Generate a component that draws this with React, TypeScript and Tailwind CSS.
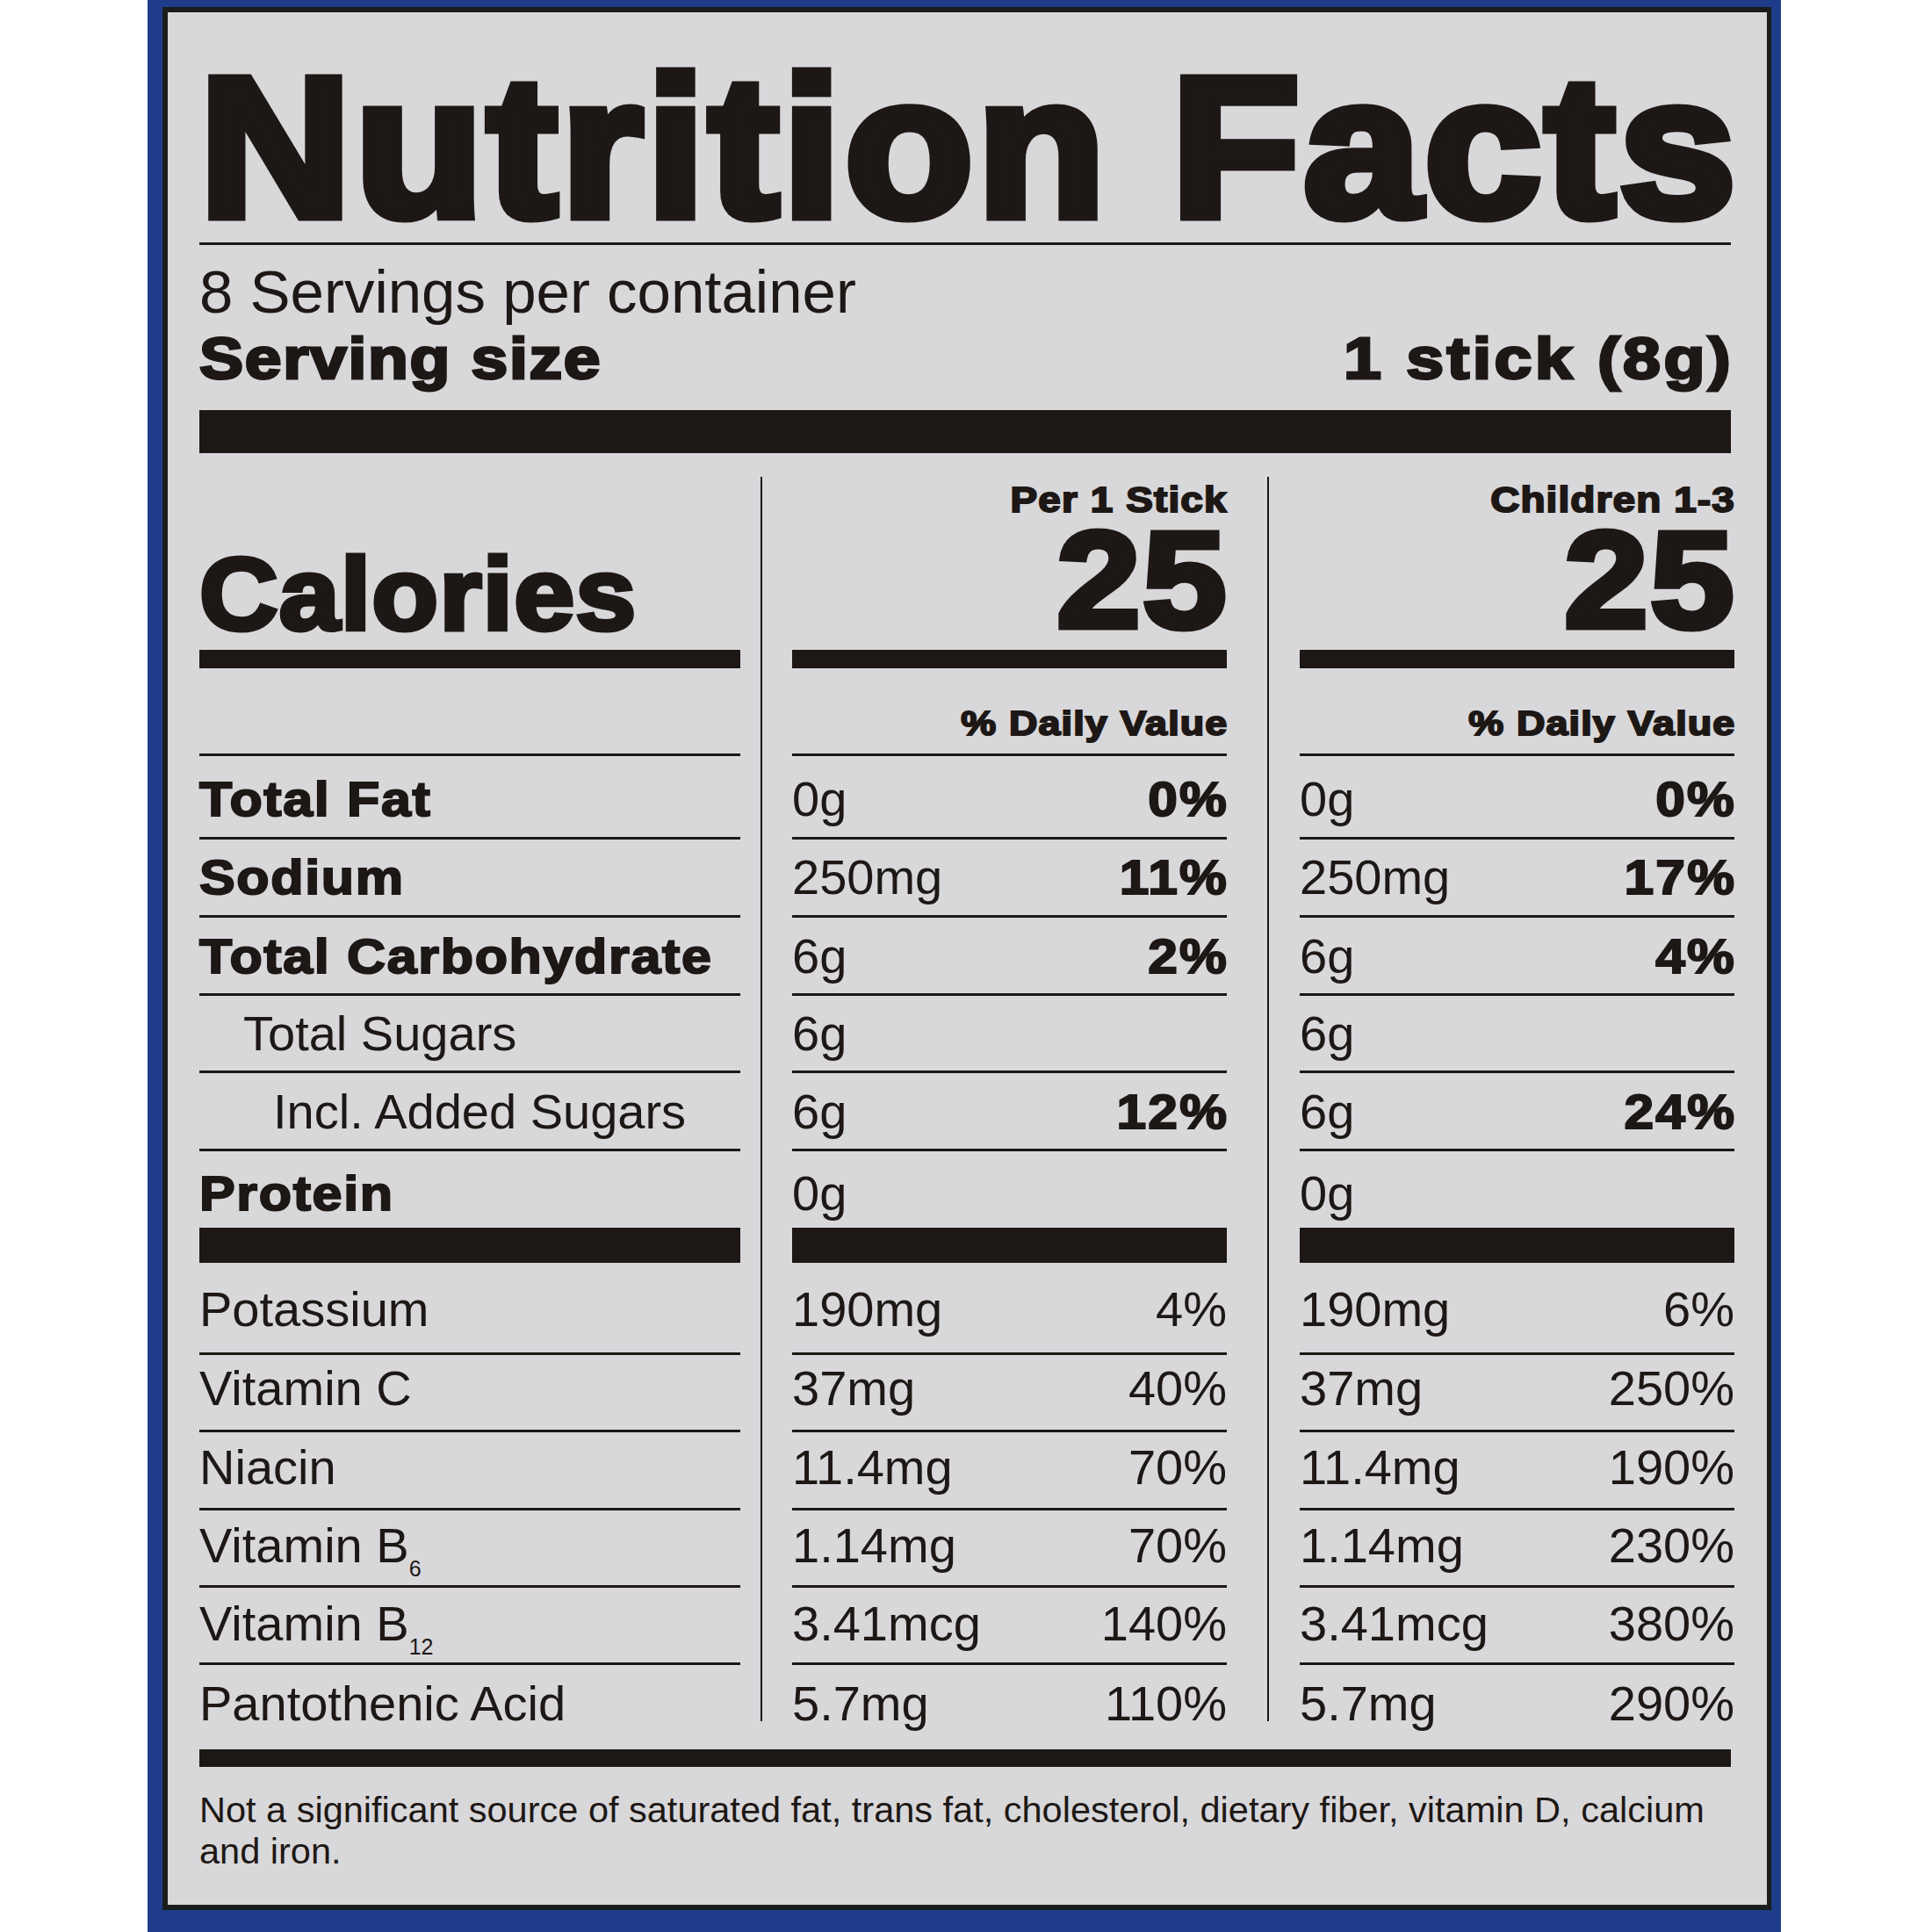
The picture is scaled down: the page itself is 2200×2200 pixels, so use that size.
const mid = [
  { amt: "0g", pct: "0%" },
  { amt: "250mg", pct: "11%" },
  { amt: "6g", pct: "2%" },
  { amt: "6g", pct: "" },
  { amt: "6g", pct: "12%" },
  { amt: "0g", pct: "" },
  { amt: "190mg", pct: "4%" },
  { amt: "37mg", pct: "40%" },
  { amt: "11.4mg", pct: "70%" },
  { amt: "1.14mg", pct: "70%" },
  { amt: "3.41mcg", pct: "140%" },
  { amt: "5.7mg", pct: "110%" },
];

const kids = [
  { amt: "0g", pct: "0%" },
  { amt: "250mg", pct: "17%" },
  { amt: "6g", pct: "4%" },
  { amt: "6g", pct: "" },
  { amt: "6g", pct: "24%" },
  { amt: "0g", pct: "" },
  { amt: "190mg", pct: "6%" },
  { amt: "37mg", pct: "250%" },
  { amt: "11.4mg", pct: "190%" },
  { amt: "1.14mg", pct: "230%" },
  { amt: "3.41mcg", pct: "380%" },
  { amt: "5.7mg", pct: "290%" },
];

// row boxes: height and line-height tuned so baselines land where the label prints them
const rows = [
  { label: "Total Fat", bold: true, indent: "", h: "h-[92px]", lead: "leading-[97px]", after: "line" },
  { label: "Sodium", bold: true, indent: "", h: "h-[86px]", lead: "leading-[85px]", after: "line" },
  { label: "Total Carbohydrate", bold: true, indent: "", h: "h-[86px]", lead: "leading-[87px]", after: "line" },
  { label: "Total Sugars", bold: false, indent: "pl-[50px]", h: "h-[85px]", lead: "leading-[85px]", after: "line" },
  { label: "Incl. Added Sugars", bold: false, indent: "pl-[84px]", h: "h-[86px]", lead: "leading-[87px]", after: "line" },
  { label: "Protein", bold: true, indent: "", h: "h-[87px]", lead: "leading-[95px]", after: "bar" },
  { label: "Potassium", bold: false, indent: "", h: "h-[102px]", lead: "leading-[105px]", after: "line" },
  { label: "Vitamin C", bold: false, indent: "", h: "h-[85px]", lead: "leading-[75px]", after: "line" },
  { label: "Niacin", bold: false, indent: "", h: "h-[86px]", lead: "leading-[79px]", after: "line" },
  { label: "Vitamin B", sub: "6", bold: false, indent: "", h: "h-[85px]", lead: "leading-[79px]", after: "line" },
  { label: "Vitamin B", sub: "12", bold: false, indent: "", h: "h-[85px]", lead: "leading-[81px]", after: "line" },
  { label: "Pantothenic Acid", bold: false, indent: "", h: "h-[96px]", lead: "leading-[87px]", after: "" },
];

// Helvetica Black stand-in: Liberation Sans Bold, widened and thickened
const heavyL = "inline-block origin-left scale-x-[1.09] font-bold tracking-[1.5px] [-webkit-text-stroke:2px_#1d1815]";
const heavyR = "inline-block origin-right scale-x-[1.08] font-bold tracking-[2px] -mr-[2px] [-webkit-text-stroke:2px_#1d1815]";

function Sep({ kind }: { kind: string }) {
  if (kind === "line") return <div className="h-[3px] bg-[#1d1815]" />;
  if (kind === "bar") return <div className="h-[40px] bg-[#1d1815]" />;
  return null;
}

function Header({ title, value }: { title: string; value: string }) {
  return (
    <>
      <div className="h-[224px] pt-[31px] text-right">
        <div className="text-[41px] leading-[45px]">
          <span className="inline-block origin-right scale-x-[1.12] font-bold tracking-[1px] -mr-[1px] [-webkit-text-stroke:2px_#1d1815]">
            {title}
          </span>
        </div>
        <div className="mt-[3px] text-[156px] leading-[130px]">
          <span className="inline-block origin-right scale-x-[1.1] font-bold tracking-[2px] -mr-[2px] [-webkit-text-stroke:7px_#1d1815]">
            {value}
          </span>
        </div>
      </div>
      <div className="h-[21px] bg-[#1d1815]" />
      <div className="h-[97px] pt-[40px] text-right text-[39px] leading-[45px]">
        <span className="inline-block origin-right scale-x-[1.15] font-bold tracking-[1px] -mr-[1px] [-webkit-text-stroke:2px_#1d1815]">
          % Daily Value
        </span>
      </div>
      <div className="h-[3px] bg-[#1d1815]" />
    </>
  );
}

function ValueColumn({ title, value, data }: { title: string; value: string; data: { amt: string; pct: string }[] }) {
  return (
    <div className="w-[495px] flex flex-col">
      <Header title={title} value={value} />
      {rows.map((r, i) => (
        <div key={i}>
          <div className={`${r.h} ${r.lead} flex justify-between text-[56px] whitespace-nowrap`}>
            <span>{data[i].amt}</span>
            <span className={i < 6 ? heavyR : ""}>{data[i].pct}</span>
          </div>
          <Sep kind={r.after} />
        </div>
      ))}
    </div>
  );
}

export default function App() {
  return (
    <div className="w-[2200px] h-[2200px] bg-white overflow-hidden font-['Liberation_Sans',Arial,sans-serif] text-[#1d1815]">
      <div className="ml-[168px] w-[1860px] h-[2200px] bg-[#1f3c8b] pt-[8px] pl-[17px] pr-[11px]">
        <div className="h-[2167px] border-[6px] border-r-[5px] border-[#1a1d1a] bg-[#d8d7da] pl-[36px] pr-[37px] pt-[54px]">
          {/* Title */}
          <h1 className="h-[200px] text-[226px] leading-[200px] whitespace-nowrap">
            <span className="inline-block origin-left scale-x-[1.06] font-bold tracking-[4px] [-webkit-text-stroke:11px_#1d1815]">
              Nutrition Facts
            </span>
          </h1>
          <div className="mt-[8px] mr-[4px] h-[3px] bg-[#1d1815]" />

          {/* Servings */}
          <div className="mt-[16px] h-[75px] text-[69px] leading-[75px] whitespace-nowrap">8 Servings per container</div>
          <div className="h-[75px] flex justify-between text-[67px] leading-[75px] whitespace-nowrap mr-[4px]">
            <span className="inline-block origin-left scale-x-[1.12] font-bold tracking-[1.5px] [-webkit-text-stroke:3px_#1d1815]">
              Serving size
            </span>
            <span className="inline-block origin-right scale-x-[1.15] font-bold tracking-[3px] -mr-[3px] [-webkit-text-stroke:3px_#1d1815]">
              1 stick (8g)
            </span>
          </div>
          <div className="mt-[22px] mr-[4px] h-[49px] bg-[#1d1815]" />

          {/* Columns */}
          <div className="flex">
            <div className="w-[616px] flex flex-col">
              <div className="h-[224px] pt-[103px] text-[116px] leading-[116px]">
                <span className="inline-block origin-left scale-x-[1.07] font-bold tracking-[1px] [-webkit-text-stroke:5px_#1d1815]">
                  Calories
                </span>
              </div>
              <div className="h-[21px] bg-[#1d1815]" />
              <div className="h-[97px]" />
              <div className="h-[3px] bg-[#1d1815]" />
              {rows.map((r, i) => (
                <div key={i}>
                  <div className={`${r.h} ${r.lead} ${r.indent} text-[56px] whitespace-nowrap`}>
                    {r.bold ? (
                      <span className={heavyL}>{r.label}</span>
                    ) : (
                      <>
                        {r.label}
                        {r.sub && <span className="text-[25px] leading-none align-[-16px]">{r.sub}</span>}
                      </>
                    )}
                  </div>
                  <Sep kind={r.after} />
                </div>
              ))}
            </div>

            <div className="w-[59px] pl-[23px]">
              <div className="w-[2px] mt-[27px] h-[1417px] bg-[#1d1815]" />
            </div>

            <ValueColumn title="Per 1 Stick" value="25" data={mid} />

            <div className="w-[83px] pl-[46px]">
              <div className="w-[2px] mt-[27px] h-[1417px] bg-[#1d1815]" />
            </div>

            <ValueColumn title="Children 1-3" value="25" data={kids} />
          </div>

          <div className="mr-[4px] h-[20px] bg-[#1d1815]" />

          {/* Footnote */}
          <p className="mt-[25px] text-[41.5px] leading-[47px]">
            Not a significant source of saturated fat, trans fat, cholesterol, dietary fiber, vitamin D, calcium and iron.
          </p>
        </div>
      </div>
    </div>
  );
}
